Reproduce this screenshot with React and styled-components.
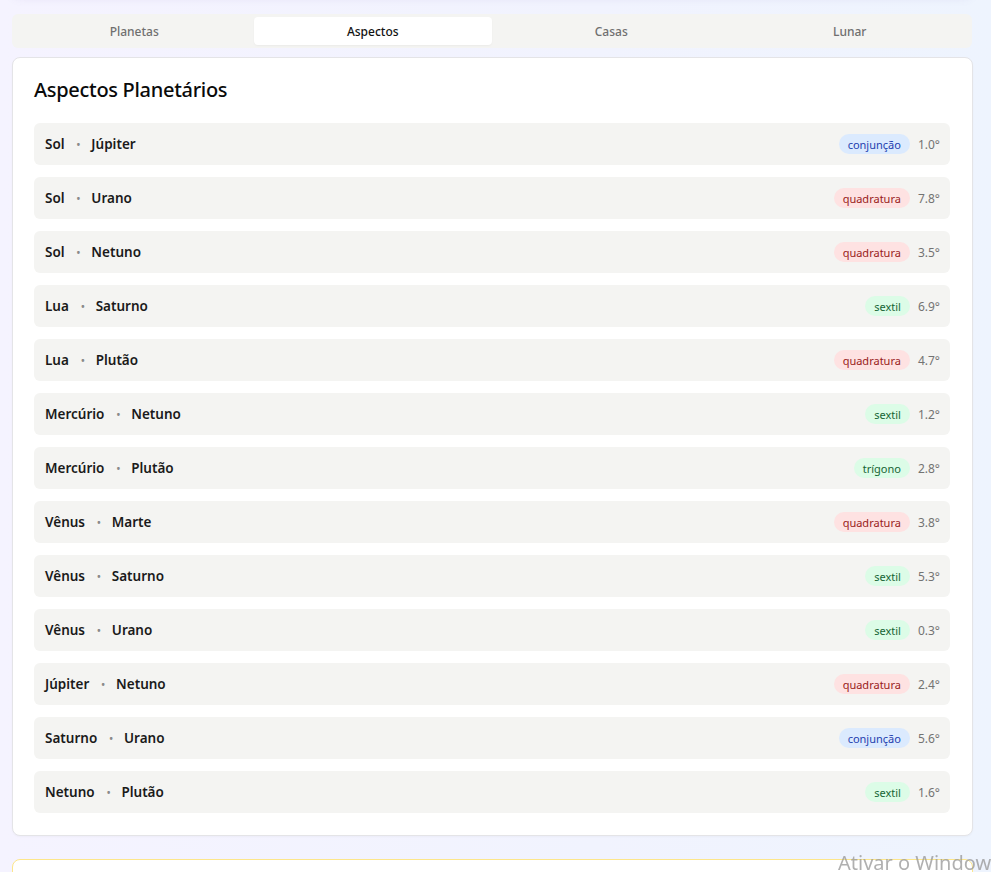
import React from "react";
import styled, { createGlobalStyle } from "styled-components";

const GlobalStyle = createGlobalStyle`
	html, body {
		margin: 0;
		padding: 0;
	}
	body {
		font-family: "Noto Sans", "Open Sans", sans-serif;
		background: linear-gradient(90deg, #f5f3ff 0%, #f1f3fe 60%, #eef4fe 100%);
		min-height: 872px;
		overflow: hidden;
	}
`;

const Page = styled.div`
	width: 960px;
	margin-left: 12px;
`;

const HeaderCard = styled.div`
	height: 30px;
	margin-top: -36px;
	margin-bottom: 20px;
	background: #ffffff;
	border-radius: 8px;
	box-shadow: 0 4px 10px rgba(120, 110, 180, 0.12);
`;

const TabBar = styled.div`
	display: grid;
	grid-template-columns: repeat(4, 1fr);
	padding: 3px;
	background: #f4f4f2;
	border-radius: 6px;
	height: 28px;
`;

const Tab = styled.button`
	border: none;
	border-radius: 4px;
	font-family: inherit;
	font-size: 12px;
	font-weight: 500;
	color: ${(p) => (p.$active ? "#111111" : "#6f6f6f")};
	background: ${(p) => (p.$active ? "#ffffff" : "transparent")};
	box-shadow: ${(p) => (p.$active ? "0 1px 2px rgba(0,0,0,0.04)" : "none")};
	cursor: pointer;
	padding: 0;
`;

const Card = styled.section`
	margin-top: 9px;
	width: 961px;
	box-sizing: border-box;
	background: #ffffff;
	border: 1px solid #e4e4e7;
	border-radius: 8px;
	padding: 18px 22px 22px 21px;
	box-shadow: 0 1px 2px rgba(0, 0, 0, 0.03);
`;

const Title = styled.h2`
	margin: 0 0 19px 0;
	font-size: 20px;
	line-height: 28px;
	font-weight: 500;
	color: #0a0a0a;
	letter-spacing: -0.3px;
`;

const List = styled.div`
	display: flex;
	flex-direction: column;
	gap: 12px;
`;

const Row = styled.div`
	display: flex;
	align-items: center;
	justify-content: space-between;
	height: 42px;
	padding: 0 10px 0 11px;
	background: #f4f4f2;
	border-radius: 6px;
`;

const Pair = styled.div`
	display: flex;
	align-items: center;
	font-size: 13.5px;
	font-weight: 600;
	color: #1a1a1a;
`;

const Dot = styled.span`
	margin: 0 11px 0 12px;
	color: #8a8a8a;
	font-size: 10px;
`;

const Right = styled.div`
	display: flex;
	align-items: center;
	gap: 8px;
`;

const badgeColors = {
	conjunção: { bg: "#dbeafe", fg: "#1e40af" },
	quadratura: { bg: "#fee2e2", fg: "#991b1b" },
	sextil: { bg: "#dcfce7", fg: "#166534" },
	trígono: { bg: "#dcfce7", fg: "#166534" },
};

const Badge = styled.span`
	display: inline-flex;
	align-items: center;
	height: 20px;
	padding: 0 9px;
	border-radius: 10px;
	font-size: 11px;
	background: ${(p) => badgeColors[p.$type].bg};
	color: ${(p) => badgeColors[p.$type].fg};
`;

const Orb = styled.span`
	font-size: 12px;
	color: #737373;
	min-width: 21px;
`;

const NoteCard = styled.div`
	margin-top: 23px;
	width: 961px;
	box-sizing: border-box;
	height: 60px;
	background: #ffffff;
	border: 1px solid #fde68a;
	border-radius: 8px;
`;

const Watermark = styled.div`
	position: fixed;
	left: 838px;
	top: 849px;
	font-family: "Noto Sans", "Open Sans", sans-serif;
	font-size: 20px;
	color: rgba(150, 150, 150, 0.75);
	white-space: nowrap;
	pointer-events: none;
`;

const aspects = [
	["Sol", "Júpiter", "conjunção", "1.0°"],
	["Sol", "Urano", "quadratura", "7.8°"],
	["Sol", "Netuno", "quadratura", "3.5°"],
	["Lua", "Saturno", "sextil", "6.9°"],
	["Lua", "Plutão", "quadratura", "4.7°"],
	["Mercúrio", "Netuno", "sextil", "1.2°"],
	["Mercúrio", "Plutão", "trígono", "2.8°"],
	["Vênus", "Marte", "quadratura", "3.8°"],
	["Vênus", "Saturno", "sextil", "5.3°"],
	["Vênus", "Urano", "sextil", "0.3°"],
	["Júpiter", "Netuno", "quadratura", "2.4°"],
	["Saturno", "Urano", "conjunção", "5.6°"],
	["Netuno", "Plutão", "sextil", "1.6°"],
];

const tabs = ["Planetas", "Aspectos", "Casas", "Lunar"];

export default function App() {
	return (
		<>
			<GlobalStyle />
			<Page>
				<HeaderCard />
				<TabBar>
					{tabs.map((t) => (
						<Tab key={t} $active={t === "Aspectos"}>
							{t}
						</Tab>
					))}
				</TabBar>
				<Card>
					<Title>Aspectos Planetários</Title>
					<List>
						{aspects.map(([a, b, type, orb]) => (
							<Row key={a + b}>
								<Pair>
									{a}
									<Dot>•</Dot>
									{b}
								</Pair>
								<Right>
									<Badge $type={type}>{type}</Badge>
									<Orb>{orb}</Orb>
								</Right>
							</Row>
						))}
					</List>
				</Card>
				<NoteCard />
			</Page>
			<Watermark>Ativar o Windows</Watermark>
		</>
	);
}
